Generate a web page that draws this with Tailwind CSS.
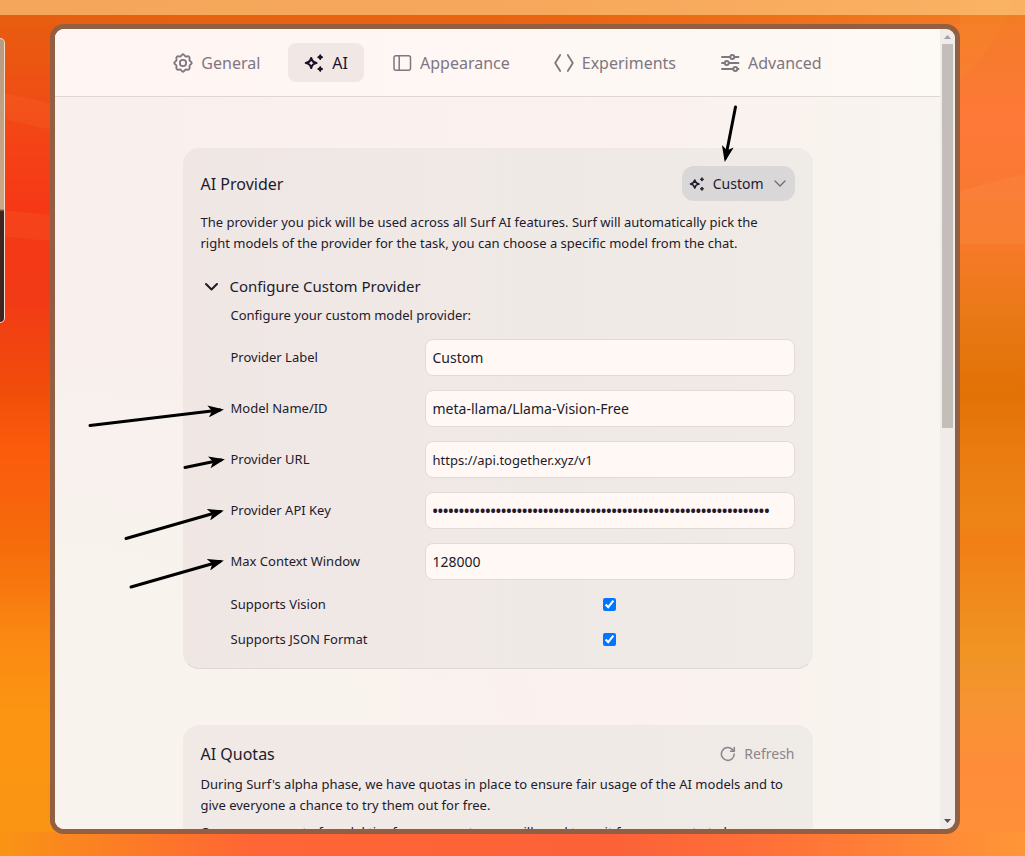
<!DOCTYPE html>
<html lang="en">
<head>
<meta charset="utf-8">
<title>Settings</title>
<script src="https://cdn.jsdelivr.net/npm/@tailwindcss/browser@4"></script>
</head>
<body class="relative flex h-screen flex-col overflow-hidden bg-[#f5700f] font-['Noto_Sans',sans-serif] text-[13px] text-[#221a2c]">
  <!-- wallpaper -->
  <svg class="absolute inset-0 -z-10 h-full w-full" viewBox="0 0 1025 856" preserveAspectRatio="none" aria-hidden="true">
    <defs>
      <linearGradient id="wl" x1="0" y1="0" x2="0" y2="1">
        <stop offset="0" stop-color="#e65f10"/><stop offset=".07" stop-color="#ec5612"/><stop offset=".16" stop-color="#f44416"/><stop offset=".24" stop-color="#f63816"/><stop offset=".35" stop-color="#f23a16"/><stop offset=".46" stop-color="#f14e0a"/><stop offset=".52" stop-color="#fb5a0c"/><stop offset=".64" stop-color="#f66c0c"/><stop offset=".75" stop-color="#fa8a12"/><stop offset=".84" stop-color="#fc9612"/><stop offset="1" stop-color="#f99414"/>
      </linearGradient>
      <linearGradient id="wr" x1="0" y1="0" x2="0" y2="1">
        <stop offset="0" stop-color="#f37d24"/><stop offset=".08" stop-color="#f87a30"/><stop offset=".14" stop-color="#ff7838"/><stop offset=".2" stop-color="#fa7834"/><stop offset=".29" stop-color="#f67a28"/><stop offset=".38" stop-color="#e77814"/><stop offset=".46" stop-color="#e27206"/><stop offset=".53" stop-color="#ea7c10"/><stop offset=".61" stop-color="#ee8416"/><stop offset=".63" stop-color="#f17f16"/><stop offset=".76" stop-color="#f09424"/><stop offset=".82" stop-color="#f69432"/><stop offset=".9" stop-color="#ff8c3a"/><stop offset="1" stop-color="#ff9238"/>
      </linearGradient>
      <linearGradient id="wb"><stop offset="0" stop-color="#f99414"/><stop offset=".08" stop-color="#fb8420"/><stop offset=".25" stop-color="#ff6535"/><stop offset=".6" stop-color="#fb6238"/><stop offset=".75" stop-color="#ff7038"/><stop offset="1" stop-color="#ff9636"/></linearGradient>
      <linearGradient id="wt"><stop offset="0" stop-color="#e65f10"/><stop offset=".55" stop-color="#ea6412"/><stop offset="1" stop-color="#f37d24"/></linearGradient>
    </defs>
    <path fill="url(#wl)" d="M0 0H512V856H0Z"/>
    <path fill="url(#wr)" d="M512 0H1025V856H512Z"/>
    <path fill="url(#wt)" d="M0 0H1025V24H0Z"/>
    <path fill="url(#wb)" d="M0 832H1025V856H0Z"/>
    <path fill="#ff8040" opacity=".14" d="M0 92Q30 98 60 106V132L0 118ZM0 210L60 216V242L0 236Z"/>
    <path fill="#ffa060" opacity=".16" d="M950 194Q990 182 1025 174V244H950Z"/>
    <path fill="#ff9a30" opacity=".12" d="M1013 0Q1000 40 960 82V0Z"/>
  </svg>

  <div class="h-[15px] shrink-0 bg-[#ffd58c]/60"></div>

  <div class="flex min-h-0 flex-1 items-stretch pt-[9px] pr-[65px] pb-[22px]">
    <div class="mt-[14px] h-[285px] w-[5px] shrink-0 rounded-r-[5px] border-y border-r border-[#f0dccb] bg-linear-to-b from-[#b99b80] from-0% via-[#cfa685] via-60% to-[#3f2420] to-61%"></div>

    <div class="ml-[45px] flex min-w-0 flex-1 overflow-hidden rounded-[14px] border-[5px] border-[#925f42]">
      <div class="flex min-w-0 flex-1 flex-col overflow-hidden bg-[radial-gradient(circle_at_0%_100%,#f8f4ed_15%,transparent_45%),linear-gradient(to_right,#f9efed,#fbf1ee_60%,#f8f4ef)]">
        <nav class="flex h-[68px] shrink-0 items-center justify-center gap-3 border-b border-[#dfd6d4] bg-linear-to-r from-[#fff5f3] to-[#fdf9f5] text-base text-[#7e7680]" aria-label="Settings">
          <button class="flex h-[39px] items-center gap-2 rounded-lg px-4">
            <svg class="size-5" viewBox="0 0 24 24" fill="none" stroke="currentColor" stroke-width="2.200" stroke-linejoin="round"><circle cx="12" cy="12" r="3.800"/><path d="M12 1.500C13.800 1.500 13.900 4 15.500 4.300C17 4.300 18.200 3.200 19.400 4.600C20.800 5.800 19.700 7 19.700 8.500C20 10.100 22.500 10.200 22.500 12C22.500 13.800 20 13.900 19.700 15.500C19.700 17 20.800 18.200 19.400 19.400C18.200 20.800 17 19.700 15.500 19.700C13.900 20 13.800 22.500 12 22.500C10.200 22.500 10.100 20 8.500 19.700C7 19.700 5.800 20.800 4.600 19.400C3.200 18.200 4.300 17 4.300 15.500C4 13.900 1.500 13.800 1.500 12C1.500 10.200 4 10.100 4.300 8.500C4.300 7 3.200 5.800 4.600 4.600C5.800 3.200 7 4.300 8.500 4.300C10.100 4 10.200 1.500 12 1.500Z"/></svg>
            General</button>
          <button class="flex h-[39px] items-center gap-2 rounded-lg bg-[#f1e8e5] px-4 text-[#1c1126]" aria-current="page">
            <svg class="size-5" viewBox="0 0 20 20" fill="none" stroke="currentColor" stroke-width="2.200" stroke-linejoin="round"><path d="M7.200 5Q8 9.200 12.500 10Q8 10.800 7.200 15Q6.400 10.800 1.800 10Q6.400 9.200 7.200 5Z"/><path fill="currentColor" stroke-width="1.400" d="M16.200 2Q16.600 3.800 18.400 4.200Q16.600 4.600 16.200 6.400Q15.800 4.600 14 4.200Q15.800 3.800 16.200 2ZM16.200 13.800Q16.600 15.600 18.400 16Q16.600 16.400 16.200 18.200Q15.800 16.400 14 16Q15.800 15.600 16.200 13.800Z"/></svg>
            AI</button>
          <button class="flex h-[39px] items-center gap-2 rounded-lg px-4">
            <svg class="size-5" viewBox="0 0 20 20" fill="none" stroke="currentColor" stroke-width="1.500"><rect x="2" y="2.750" width="16.500" height="14.500" rx="2"/><path d="M7.200 3V17"/></svg>
            Appearance</button>
          <button class="flex h-[39px] items-center gap-2 rounded-lg px-4">
            <svg class="size-5" viewBox="0 0 20 20" fill="none" stroke="currentColor" stroke-width="1.800" stroke-linecap="round" stroke-linejoin="round"><path d="M6.200 2L1.200 10L6.200 18M13.800 2L18.800 10L13.800 18"/></svg>
            Experiments</button>
          <button class="flex h-[39px] items-center gap-2 rounded-lg px-4">
            <svg class="size-5" viewBox="0 0 20 20" fill="none" stroke="currentColor" stroke-width="1.900" stroke-linecap="round"><path d="M2 4H10M14.500 4H18.500M2 10H4.500M9 10H18.500M2 16H13M17.500 16H18.500"/><circle cx="12.300" cy="4" r="2"/><circle cx="6.800" cy="10" r="2"/><circle cx="15.300" cy="16" r="2"/></svg>
            Advanced</button>
        </nav>

        <main class="flex min-h-0 flex-1 flex-col gap-14 overflow-hidden px-6 pt-[51px]">
          <section class="mx-auto w-full max-w-[630px] shrink-0 rounded-2xl border border-transparent border-b-[#dfd8d5] bg-linear-to-r from-[#f0e7e5] to-[#efebe6] bg-origin-border px-[17px] pt-[17px] pb-[18px]">
            <div class="flex items-center justify-between">
              <h2 class="text-base">AI Provider</h2>
              <button class="flex h-[35px] items-center gap-2 rounded-xl bg-[#dad7d8] px-[7px] text-sm">
                <svg class="size-4" viewBox="0 0 20 20" fill="none" stroke="currentColor" stroke-width="2" stroke-linejoin="round"><path d="M7.200 5Q8 9.200 12.500 10Q8 10.800 7.200 15Q6.400 10.800 1.800 10Q6.400 9.200 7.200 5Z"/><path fill="currentColor" stroke-width="1.200" d="M16.200 2Q16.600 3.800 18.400 4.200Q16.600 4.600 16.200 6.400Q15.800 4.600 14 4.200Q15.800 3.800 16.200 2ZM16.200 13.800Q16.600 15.600 18.400 16Q16.600 16.400 16.200 18.200Q15.800 16.400 14 16Q15.800 15.600 16.200 13.800Z"/></svg>
                Custom
                <svg class="size-4 text-[#6f6975]" viewBox="0 0 16 16" fill="none" stroke="currentColor" stroke-width="1.300" stroke-linecap="round" stroke-linejoin="round"><path d="M3 5L8 10L13 5"/></svg>
              </button>
            </div>
            <p class="mt-[11px] leading-[21px]">The provider you pick will be used across all Surf AI features. Surf will automatically pick the<br>right models of the provider for the task, you can choose a specific model from the chat.</p>
            <details open class="mt-5">
              <summary class="flex h-6 cursor-pointer list-none items-center gap-2 text-[15px]">
                <svg class="size-[21px]" viewBox="0 0 21 21" fill="none" stroke="currentColor" stroke-width="2" stroke-linecap="round" stroke-linejoin="round"><path d="M5 8L10.500 13.500L16 8"/></svg>
                Configure Custom Provider
              </summary>
              <div class="pl-[30px]">
                <p class="mt-[7px] leading-[21px]">Configure your custom model provider:</p>
                <div class="mt-[13px] flex flex-col gap-[14px]">
                  <div class="grid grid-cols-[194px_1fr] items-center"><label for="lab">Provider Label</label><input id="lab" value="Custom" class="h-[37px] min-w-0 rounded-lg border border-[#e2dad7] bg-[#fff8f4] px-[7px] text-sm"></div>
                  <div class="grid grid-cols-[194px_1fr] items-center"><label for="mod">Model Name/ID</label><input id="mod" value="meta-llama/Llama-Vision-Free" class="h-[37px] min-w-0 rounded-lg border border-[#e2dad7] bg-[#fff8f4] px-[7px] text-sm"></div>
                  <div class="grid grid-cols-[194px_1fr] items-center"><label for="url">Provider URL</label><input id="url" value="https://api.together.xyz/v1" class="h-[37px] min-w-0 rounded-lg border border-[#e2dad7] bg-[#fff8f4] px-[7px] text-[13px]"></div>
                  <div class="grid grid-cols-[194px_1fr] items-center"><label for="key">Provider API Key</label><input id="key" type="password" value="0123456789012345678901234567890123456789012345678901234567890123" class="h-[37px] min-w-0 rounded-lg border border-[#e2dad7] bg-[#fff8f4] px-[7px] text-sm font-bold"></div>
                  <div class="grid grid-cols-[194px_1fr] items-center"><label for="ctx">Max Context Window</label><input id="ctx" value="128000" class="h-[37px] min-w-0 rounded-lg border border-[#e2dad7] bg-[#fff8f4] px-[7px] text-sm"></div>
                  <div class="grid h-[21px] grid-cols-[194px_1fr] items-center"><label for="vis">Supports Vision</label><input id="vis" type="checkbox" checked class="justify-self-center"></div>
                  <div class="grid h-[21px] grid-cols-[194px_1fr] items-center"><label for="json">Supports JSON Format</label><input id="json" type="checkbox" checked class="justify-self-center"></div>
                </div>
              </div>
            </details>
          </section>

          <section class="mx-auto w-full max-w-[630px] shrink-0 rounded-2xl border border-transparent bg-linear-to-r from-[#f1e9e6] to-[#efebe6] bg-origin-border px-[17px] pt-4 pb-5">
            <div class="flex h-6 items-center justify-between">
              <h2 class="text-base">AI Quotas</h2>
              <button class="flex items-center gap-2 text-sm text-[#8b848b]">
                <svg class="size-4" viewBox="0 0 16 16" fill="none" stroke="currentColor" stroke-width="1.500" stroke-linecap="round" stroke-linejoin="round"><path d="M14.200 8A6.400 6.400 0 1 1 12.300 3.400L14 5.200M14.300 1.500V5.300H10.500"/></svg>
                Refresh</button>
            </div>
            <p class="mt-2 leading-[21px]">During Surf's alpha phase, we have quotas in place to ensure fair usage of the AI models and to<br>give everyone a chance to try them out for free.</p>
            <p class="mt-[6px] leading-[21px]">Once you run out of model tier for your quota, you will need to wait for your quota to be renewed.</p>
          </section>
        </main>
      </div>

      <div class="flex w-[15px] shrink-0 flex-col items-center bg-[#f0ece9]" aria-hidden="true">
        <svg class="h-[15px] w-[15px] shrink-0" viewBox="0 0 15 15"><path fill="#a3a09e" d="M4 10L7.500 6L11 10Z"/></svg>
        <div class="h-[48%] w-[11px] bg-linear-to-b from-[#c2beba] via-[#c6bdbb] to-[#c3beb8]"></div>
        <svg class="mt-auto h-[15px] w-[15px] shrink-0" viewBox="0 0 15 15"><path fill="#555250" d="M4 5L7.500 9L11 5Z"/></svg>
      </div>
    </div>
  </div>

  <!-- annotation arrows -->
  <svg class="pointer-events-none absolute top-0 left-0 h-[856px] w-[1025px]" viewBox="0 0 1025 856" fill="none" stroke="#000" stroke-width="3" stroke-linecap="round" aria-hidden="true">
    <defs><marker id="tip" viewBox="0 0 16 12" refX="12" refY="6" markerWidth="16" markerHeight="12" markerUnits="userSpaceOnUse" orient="auto"><path d="M0 0L16 6L0 12L4 6Z" fill="#000" stroke="none"/></marker></defs>
    <path marker-end="url(#tip)" d="M735.500 107L725.500 158"/>
    <path marker-end="url(#tip)" d="M90 425.500L220 410"/>
    <path marker-end="url(#tip)" d="M185 467.500L221 460"/>
    <path marker-end="url(#tip)" d="M126 538.500L220 511.500"/>
    <path marker-end="url(#tip)" d="M131 587L220 561.500"/>
  </svg>
</body>
</html>
